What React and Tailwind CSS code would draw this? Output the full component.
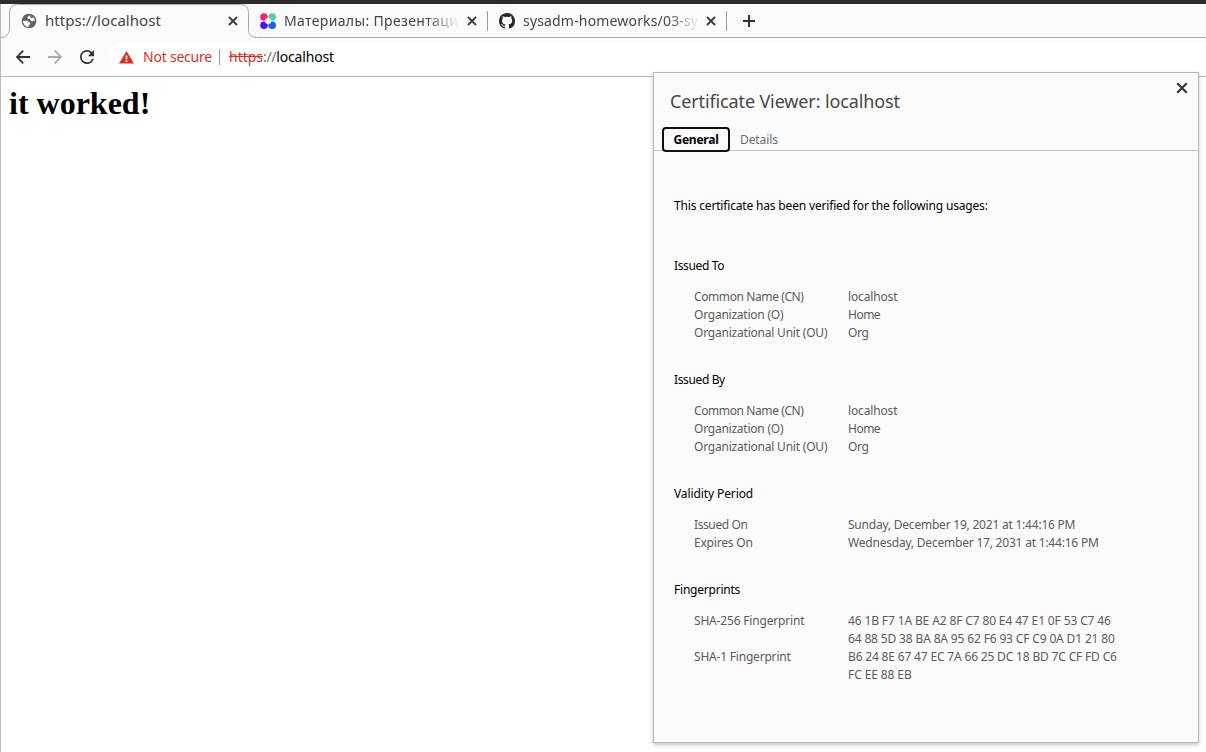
const CloseIcon = ({ className }) => (
  <svg className={className} viewBox="0 0 10 10" fill="none" stroke="#3c3c3c" strokeWidth="1.9">
    <path d="M1 1l8 8M9 1l-8 8" />
  </svg>
);

const Globe = () => (
  <svg className="size-4 shrink-0" viewBox="0 0 24 24" fill="#5f6368">
    <circle cx="12" cy="12" r="11" />
    <path
      fill="#fbfbfb"
      d="M14 3.3C12.400 3.600 11.500 4.800 10.300 5.500C9 6.300 9.200 8.700 11 8.800L13.500 9C14.300 10.300 14.300 12 16 12.300C18 12.600 18.500 11.300 21 11.700C20.800 9.500 19.800 7.700 18.500 6.300L16 8L14 6.500Z"
    />
    <path
      fill="#fbfbfb"
      d="M3 11.500H8.500C10.500 11.500 11 13.300 12.500 13.800C14.500 14.500 14.800 16.500 13 17.300C11.500 18 11.800 19.500 11 21C6.500 20.700 3 16.500 3 11.500Z"
    />
  </svg>
);

const Dots = () => (
  <svg className="size-4 shrink-0" viewBox="0 0 16 16">
    <circle cx="4" cy="4" r="3.8" fill="#f42272" />
    <circle cx="12.2" cy="4" r="3.8" fill="#4fd1a5" />
    <circle cx="4" cy="12.2" r="3.8" fill="#5a0cf0" />
    <circle cx="12.2" cy="12.2" r="3.8" fill="#0a66ff" />
    <circle cx="8.1" cy="8.1" r="3" fill="#fbfbfb" />
  </svg>
);

const GitHub = () => (
  <svg className="size-4 shrink-0" viewBox="0 0 16 16" fill="#24292e">
    <path d="M8 0C3.58 0 0 3.58 0 8c0 3.54 2.29 6.53 5.47 7.59.4.07.55-.17.55-.38 0-.19-.01-.82-.01-1.49-2.01.37-2.53-.49-2.69-.94-.09-.23-.48-.94-.82-1.13-.28-.15-.68-.52-.01-.53.63-.01 1.08.58 1.23.82.72 1.21 1.87.87 2.33.66.07-.52.28-.87.51-1.07-1.78-.2-3.64-.89-3.64-3.95 0-.87.31-1.59.82-2.15-.08-.2-.36-1.02.08-2.12 0 0 .67-.21 2.2.82.64-.18 1.32-.27 2-.27s1.36.09 2 .27c1.53-1.04 2.2-.82 2.2-.82.44 1.1.16 1.92.08 2.12.51.56.82 1.27.82 2.15 0 3.07-1.87 3.75-3.65 3.95.29.25.54.73.54 1.48 0 1.07-.01 1.93-.01 2.2 0 .21.15.46.55.38A8.01 8.01 0 0 0 16 8c0-4.42-3.58-8-8-8z" />
  </svg>
);

const Row = ({ label, labelClass, lines }) => (
  <div className="flex">
    <div className={"w-[154px] shrink-0 " + labelClass}>{label}</div>
    <div>
      {lines.map(([text, cls]) => (
        <div key={text} className={cls}>{text}</div>
      ))}
    </div>
  </div>
);

const Section = ({ title, titleClass, rows }) => (
  <section className="mb-[29px]">
    <h3 className={"mb-[13px] text-black " + titleClass}>{title}</h3>
    <div className="pl-5 text-[#5c5c5c]">
      {rows.map((r) => (
        <Row key={r.label} {...r} />
      ))}
    </div>
  </section>
);

const entity = [
  { label: "Common Name (CN)", labelClass: "tracking-[-0.4px]", lines: [["localhost", "tracking-[-0.15px]"]] },
  { label: "Organization (O)", labelClass: "tracking-[-0.23px]", lines: [["Home", "tracking-[-0.5px]"]] },
  { label: "Organizational Unit (OU)", labelClass: "tracking-[-0.21px]", lines: [["Org", "tracking-[-0.3px]"]] },
];

const validity = [
  { label: "Issued On", labelClass: "tracking-[-0.4px]", lines: [["Sunday, December 19, 2021 at 1:44:16 PM", "tracking-[-0.22px]"]] },
  { label: "Expires On", labelClass: "tracking-[-0.2px]", lines: [["Wednesday, December 17, 2031 at 1:44:16 PM", "tracking-[-0.21px]"]] },
];

const fingerprints = [
  {
    label: "SHA-256 Fingerprint",
    labelClass: "tracking-[-0.18px]",
    lines: [
      ["46 1B F7 1A BE A2 8F C7 80 E4 47 E1 0F 53 C7 46", "tracking-[-0.13px]"],
      ["64 88 5D 38 BA 8A 95 62 F6 93 CF C9 0A D1 21 80", "tracking-[-0.15px]"],
    ],
  },
  {
    label: "SHA-1 Fingerprint",
    labelClass: "tracking-[-0.2px]",
    lines: [
      ["B6 24 8E 67 47 EC 7A 66 25 DC 18 BD 7C CF FD C6", "tracking-[-0.17px]"],
      ["FC EE 88 EB", "tracking-[-0.1px]"],
    ],
  },
];

const CertificateDialog = () => (
  <div className="absolute left-[653px] top-[72px] h-[671px] w-[546px] border border-[#b8b8b8] bg-[#fbfbfb] text-xs leading-[18px] shadow-[0_2px_4px_rgba(0,0,0,0.22)]">
    <CloseIcon className="absolute right-[10px] top-[9px] size-[12px]" />
    <h2 className="h-[54px] pl-4 pt-[16px] text-[18px] leading-6 tracking-[-0.13px] text-[#474747]">
      Certificate Viewer: localhost
    </h2>
    <div className="flex h-6 border-b border-[#c4c4c4] pl-2">
      <div className="relative h-[25px] w-[68px] rounded-[4px] border-2 border-[#101010] bg-[#fbfbfb] text-center font-bold leading-[21px] tracking-[-0.25px] text-black">
        General
      </div>
      <div className="pl-[10px] leading-[25px] tracking-[-0.1px] text-[#6b6b6b]">Details</div>
    </div>
    <div className="px-5 pt-[46px]">
      <p className="mb-[42px] tracking-[-0.17px] text-black">
        This certificate has been verified for the following usages:
      </p>
      <Section title="Issued To" titleClass="tracking-[-0.35px]" rows={entity} />
      <Section title="Issued By" titleClass="tracking-[-0.37px]" rows={entity} />
      <Section title="Validity Period" titleClass="tracking-[-0.1px]" rows={validity} />
      <Section title="Fingerprints" titleClass="tracking-[-0.22px]" rows={fingerprints} />
    </div>
  </div>
);

const TabStrip = () => (
  <div className="relative flex h-[34px] items-center bg-[#fbfbfb] text-[14px] text-[#454545]">
    <svg className="absolute left-0 top-0 h-[34px] w-[1205px]" viewBox="0 0 1205 34" fill="none" stroke="#a9a9a9">
      <path d="M0 33.5C5 33.5 8.5 30 8.5 25V8.5Q8.5 .5 16.5 .5H239.5Q247.5 .5 247.5 8.5V25.5Q247.5 33.5 255.5 33.5H1205" />
    </svg>
    <div className="flex w-[247px] items-center pl-5">
      <Globe />
      <span className="-mt-0.5 ml-2 w-[183px] whitespace-nowrap text-[15px] tracking-[0.05px]">https://localhost</span>
      <CloseIcon className="size-[10px] shrink-0" />
    </div>
    <div className="flex w-[239px] items-center pl-3">
      <Dots />
      <span className="-mt-0.5 ml-2 w-[175px] whitespace-nowrap tracking-[0.35px] mask-r-from-82% mask-r-to-100%">
        Материалы: Презентаци
      </span>
      <CloseIcon className="ml-[8px] size-[10px] shrink-0" />
    </div>
    <div className="h-5 w-px bg-[#9b9b9b]" />
    <div className="flex w-[238px] items-center pl-[11px]">
      <GitHub />
      <span className="-mt-0.5 ml-2 w-[176px] whitespace-nowrap tracking-[0.17px] mask-r-from-82% mask-r-to-100%">
        sysadm-homeworks/03-sy
      </span>
      <CloseIcon className="ml-[7px] size-[10px] shrink-0" />
    </div>
    <div className="h-5 w-px bg-[#9b9b9b]" />
    <svg className="ml-4 size-3" viewBox="0 0 12 12" stroke="#333" strokeWidth="2">
      <path d="M6 0v12M0 6h12" />
    </svg>
  </div>
);

const Toolbar = () => (
  <div className="flex h-[39px] items-center border-b border-[#b8b8b8] bg-[#fbfbfb] pl-[15px]">
    <svg className="size-[14px]" viewBox="0 0 14 14" fill="none" stroke="#333" strokeWidth="1.8">
      <path d="M7.2 .7L.9 7l6.3 6.3M1 7h13" />
    </svg>
    <svg className="ml-[18px] size-[14px]" viewBox="0 0 14 14" fill="none" stroke="#ababab" strokeWidth="1.8">
      <path d="M6.8 .7L13.1 7l-6.3 6.3M13 7H0" />
    </svg>
    <svg className="ml-[18px] size-[14px]" viewBox="4 4 16 16" fill="#333">
      <path d="M17.65 6.35A7.96 7.96 0 0 0 12 4a8 8 0 1 0 7.73 10h-2.08A6 6 0 1 1 12 6c1.66 0 3.14.69 4.22 1.78L13 11h7V4z" />
    </svg>
    <div className="ml-[15px] flex h-[30px] grow items-center rounded-l-full bg-white pl-[10px] text-[14px]">
      <svg className="size-[15px] shrink-0" viewBox="0 0 15 15">
        <path d="M7.5 1L15 13.5H0z" fill="#d93025" />
        <path d="M6.7 5.5h1.6v3.8H6.7zM6.7 10.3h1.6v1.6H6.7z" fill="#fff" />
      </svg>
      <span className="-mt-0.5 ml-[9px] w-[76px] whitespace-nowrap tracking-[-0.22px] text-[#d93025]">Not secure</span>
      <div className="h-4 w-px bg-[#9b9b9b]" />
      <span className="-mt-0.5 ml-[9px] whitespace-nowrap text-[#d93025] line-through">https</span>
      <span className="-mt-0.5 whitespace-nowrap tracking-[-0.35px] text-[#6b6b6b]">://</span>
      <span className="-mt-0.5 whitespace-nowrap tracking-[-0.15px] text-black">localhost</span>
    </div>
  </div>
);

export default function App() {
  return (
    <div className="relative flex h-[752px] w-[1206px] flex-col overflow-hidden bg-white font-['Noto_Sans',sans-serif]">
      <div className="h-1 bg-[#2d2b2d]" />
      <div className="grow border-l border-[#b8b8b8]">
        <TabStrip />
        <Toolbar />
        <h1 className="pl-2 pt-[8px] font-['Liberation_Serif',serif] text-[32px] font-bold leading-[37px] text-black">
          it worked!
        </h1>
      </div>
      <CertificateDialog />
    </div>
  );
}
